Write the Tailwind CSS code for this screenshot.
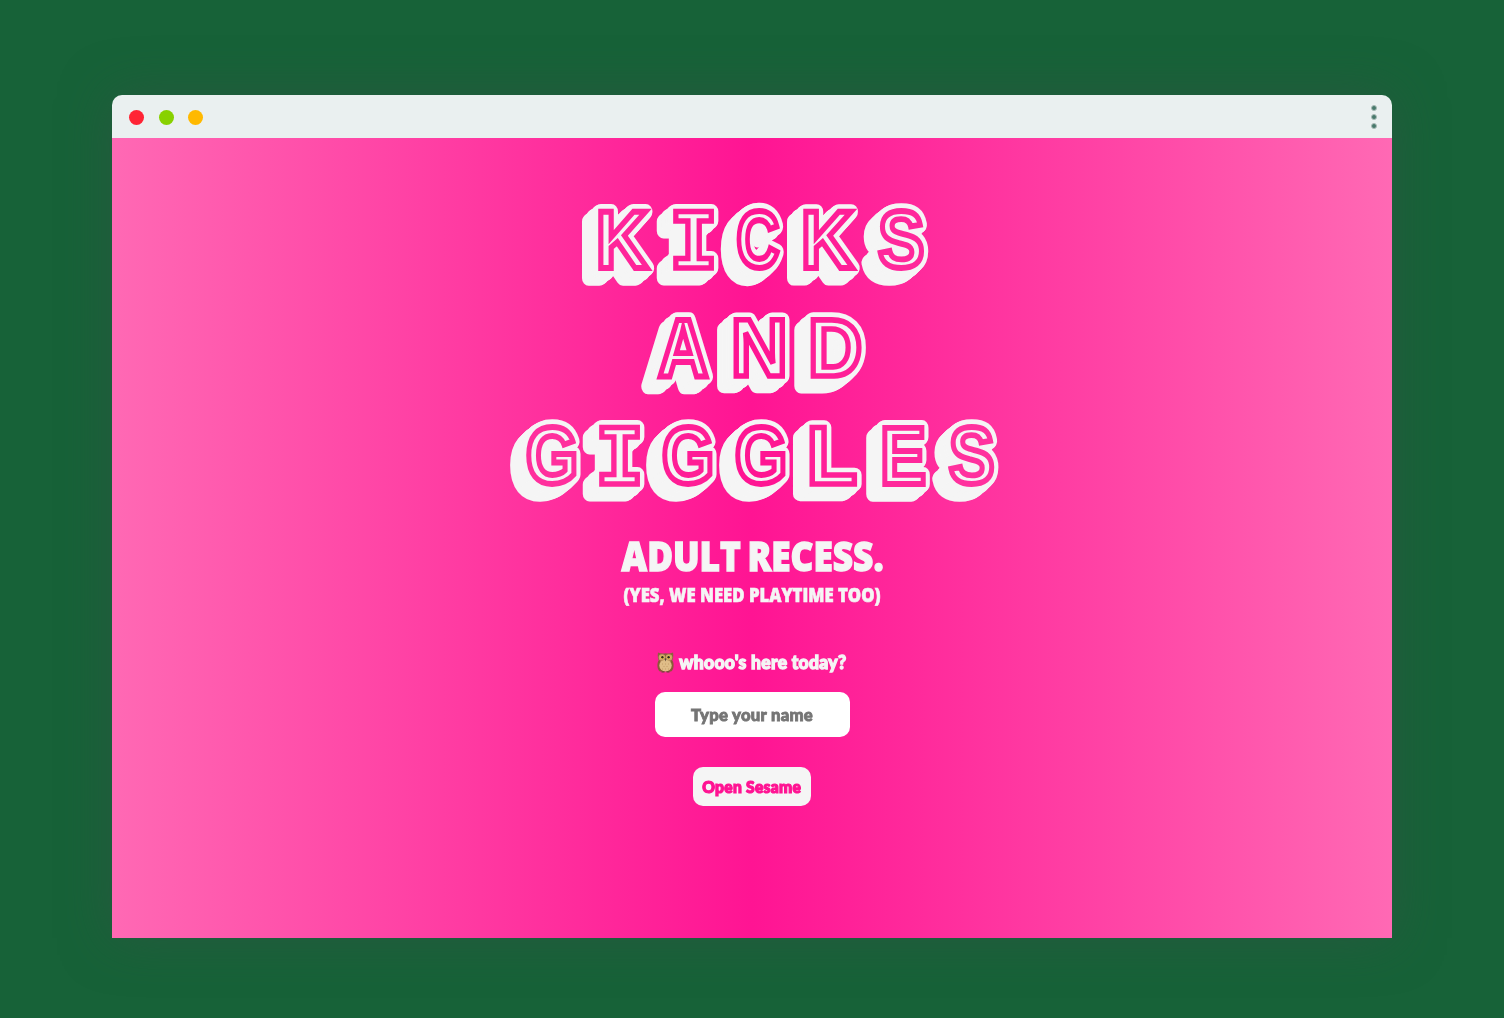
<!DOCTYPE html>
<html lang="en">
<head>
<meta charset="utf-8">
<title>Kicks and Giggles</title>
<script src="https://cdn.jsdelivr.net/npm/@tailwindcss/browser@4"></script>
</head>
<body class="h-[1018px] overflow-hidden bg-[#176238] px-[112px] pt-[95px]">
<div class="w-[1280px] overflow-hidden rounded-t-[10px] shadow-[0_0_50px_rgba(50,84,68,0.6)]">
  <header class="flex h-[43px] items-center justify-between bg-[#eaf0f0] pl-[17px] pr-[15px]">
    <div class="flex gap-[14.7px] pt-px">
      <i class="size-[15px] rounded-full bg-[#ff2435]"></i>
      <i class="size-[15px] rounded-full bg-[#88d100]"></i>
      <i class="size-[15px] rounded-full bg-[#ffb900]"></i>
    </div>
    <div class="flex flex-col gap-[3px]">
      <i class="size-[6px] rounded-full border border-[#a9bbb7] bg-[#47796b]"></i>
      <i class="size-[6px] rounded-full border border-[#a9bbb7] bg-[#47796b]"></i>
      <i class="size-[6px] rounded-full border border-[#a9bbb7] bg-[#47796b]"></i>
    </div>
  </header>
  <main class="flex h-[800px] flex-col items-center bg-[linear-gradient(90deg,#ff69b4,#ff1493,#ff69b4)] pt-[62px] font-['Lato',sans-serif] font-black text-[#f5f5f5]">
    <h1 class="h-[308px]"><svg id="title" class="block overflow-visible" width="504" height="308" viewBox="500 200 504 308" aria-label="Kicks and Giggles">
      <g id="solid" class="filter-[drop-shadow(-1px_1px_0_#f5f5f5)_drop-shadow(-2px_1px_0_#f5f5f5)_drop-shadow(-4px_4px_0_#f5f5f5)_drop-shadow(-5px_4px_0_#f5f5f5)]" fill="#f5f5f5" stroke="#f5f5f5" stroke-width="14.500" stroke-linejoin="round"></g>
      <g id="faces" fill="#f5f5f5" stroke-width="5.500" stroke-linejoin="miter"></g>
    </svg></h1>
    <h2 class="mt-[23px] flex h-[48px] w-[264px] items-center justify-center whitespace-nowrap pl-[2px] font-['Open_Sans',sans-serif] text-[41px] font-extrabold leading-[48px]"><span data-width="262" class="inline-block [word-spacing:-3px] [-webkit-text-stroke:1.4px_#f5f5f5]">ADULT RECESS.</span></h2>
    <h3 class="mt-[4px] flex h-[24px] w-[258px] items-center justify-center whitespace-nowrap font-['Open_Sans',sans-serif] text-[18.5px] font-extrabold leading-[24px]"><span data-width="257" class="inline-block [-webkit-text-stroke:0.6px_#f5f5f5]">(YES, WE NEED PLAYTIME TOO)</span></h3>
    <div class="mt-[43px] flex h-[24px] w-[193px] items-center gap-[5px]">
      <svg class="h-[22px] w-[19px] shrink-0" viewBox="0 0 19 22">
        <path d="M3 9C.5 12 1 19 4 20.500h11c3-1.500 3.500-8.500 1-11.500z" fill="#8a5a37"/>
        <path d="M2 1.500Q5 3 9.500 2.200Q14 3 17 1.500Q18 7 15.500 10.500H3.500Q1 7 2 1.500" fill="#8b633d"/>
        <ellipse cx="9.500" cy="14.500" rx="6.200" ry="6" fill="#dfbd88"/>
        <circle cx="6" cy="6.500" r="3.300" fill="#c9a26b"/><circle cx="13" cy="6.500" r="3.300" fill="#c9a26b"/>
        <circle cx="6.300" cy="6.300" r="1.900" fill="#f3c447"/><circle cx="12.700" cy="6.300" r="1.900" fill="#f3c447"/>
        <circle cx="6.400" cy="6.300" r="1.200" fill="#2d2926"/><circle cx="12.600" cy="6.300" r="1.200" fill="#2d2926"/>
        <path d="M8.500 7.500h2l-1 3z" fill="#554538"/>
        <path d="M6 13h1m2 0h1m2 0h1M7.500 15.500h1m2 0h1M6 18h1m2 0h1m2 0h1" stroke="#bd9460" stroke-width=".8"/>
        <path d="M5.500 20.800h3m2 0h3" stroke="#6b4936" stroke-width="1.200"/>
      </svg>
      <span class="flex w-[167px] justify-center whitespace-nowrap text-[18px] leading-[24px]"><span data-width="167" class="inline-block tracking-[0.3px] [-webkit-text-stroke:1.3px_#f5f5f5]">whooo's here today?</span></span>
    </div>
    <div class="mt-[18px] flex h-[45px] w-[195px] items-center justify-center whitespace-nowrap rounded-[10px] bg-white pt-[2px] text-[17.5px] text-[#757575]"><span data-width="122" class="inline-block tracking-[0.3px] [-webkit-text-stroke:0.9px_#757575]">Type your name</span></div>
    <button class="mt-[30px] flex h-[39px] w-[118px] items-center justify-center whitespace-nowrap rounded-[10px] bg-[#f5f5f5] text-[16px] text-[#ff1493]"><span data-width="99" class="inline-block tracking-[0.3px] [-webkit-text-stroke:1.2px_#ff1493]">Open Sesame</span></button>
  </main>
</div>
<script>
// character, left edge, right edge, top edge of the letter face
const letters = [
  ['K',597.5,650.5,208.5],['I',672.5,714.5,208.5],['C',736,780.5,208.5],['K',802.5,856,208.5],['S',877,924.500,208.5],
  ['A',657,709.500,316.500],['N',733,785.500,316.500],['D',810,862.500,316.500],
  ['G',526,577,424.500],['I',598.500,640.500,424.500],['G',662,713,424.500],['G',735,786,424.500],['L',809,858,424.500],['E',881.500,926,424.500],['S',947.500,994.500,424.500]
];
const NS = 'http://www.w3.org/2000/svg';
function drawTitle() {
  const ctx = document.createElement('canvas').getContext('2d');
  const solid = document.getElementById('solid');
  const faces = document.getElementById('faces');
  const w = 5.5;
  letters.forEach(([ch, x1, x2, y1], i) => {
    const font = ch === 'I' ? 'Liberation Mono' : 'Liberation Sans';
    const weight = 700;
    ctx.font = weight + ' 100px "' + font + '"';
    const m = ctx.measureText(ch);
    const sx = (x2 - x1 - w) / (m.actualBoundingBoxRight + m.actualBoundingBoxLeft);
    const sy = (62 - w) / (m.actualBoundingBoxAscent + m.actualBoundingBoxDescent);
    const t = document.createElementNS(NS, 'text');
    t.id = 'letter' + i;
    t.textContent = ch;
    t.setAttribute('font-family', font);
    t.setAttribute('font-size', 100);
    t.setAttribute('font-weight', weight);
    t.setAttribute('vector-effect', 'non-scaling-stroke');
    const tx = x1 + w / 2 + m.actualBoundingBoxLeft * sx;
    const ty = y1 + w / 2 + m.actualBoundingBoxAscent * sy;
    t.setAttribute('transform', `translate(${tx} ${ty}) scale(${sx} ${sy})`);
    solid.appendChild(t);
    // the letter face takes the colour that the backdrop has behind it
    const f = Math.abs((x1 + x2) / 2 - 752) / 640;
    const u = document.createElementNS(NS, 'use');
    u.setAttribute('href', '#letter' + i);
    u.setAttribute('stroke', `rgb(255 ${20 + 85 * f} ${147 + 33 * f})`);
    faces.appendChild(u);
  });
}
drawTitle();
function fit() {
  for (const el of document.querySelectorAll('[data-width]')) {
    el.style.transform = 'none';
    el.style.transform = `scaleX(${el.dataset.width / el.getBoundingClientRect().width})`;
  }
}
fit();
window.addEventListener('load', () => { fit(); requestAnimationFrame(fit); });
document.fonts.ready.then(fit);
</script>
</body>
</html>
